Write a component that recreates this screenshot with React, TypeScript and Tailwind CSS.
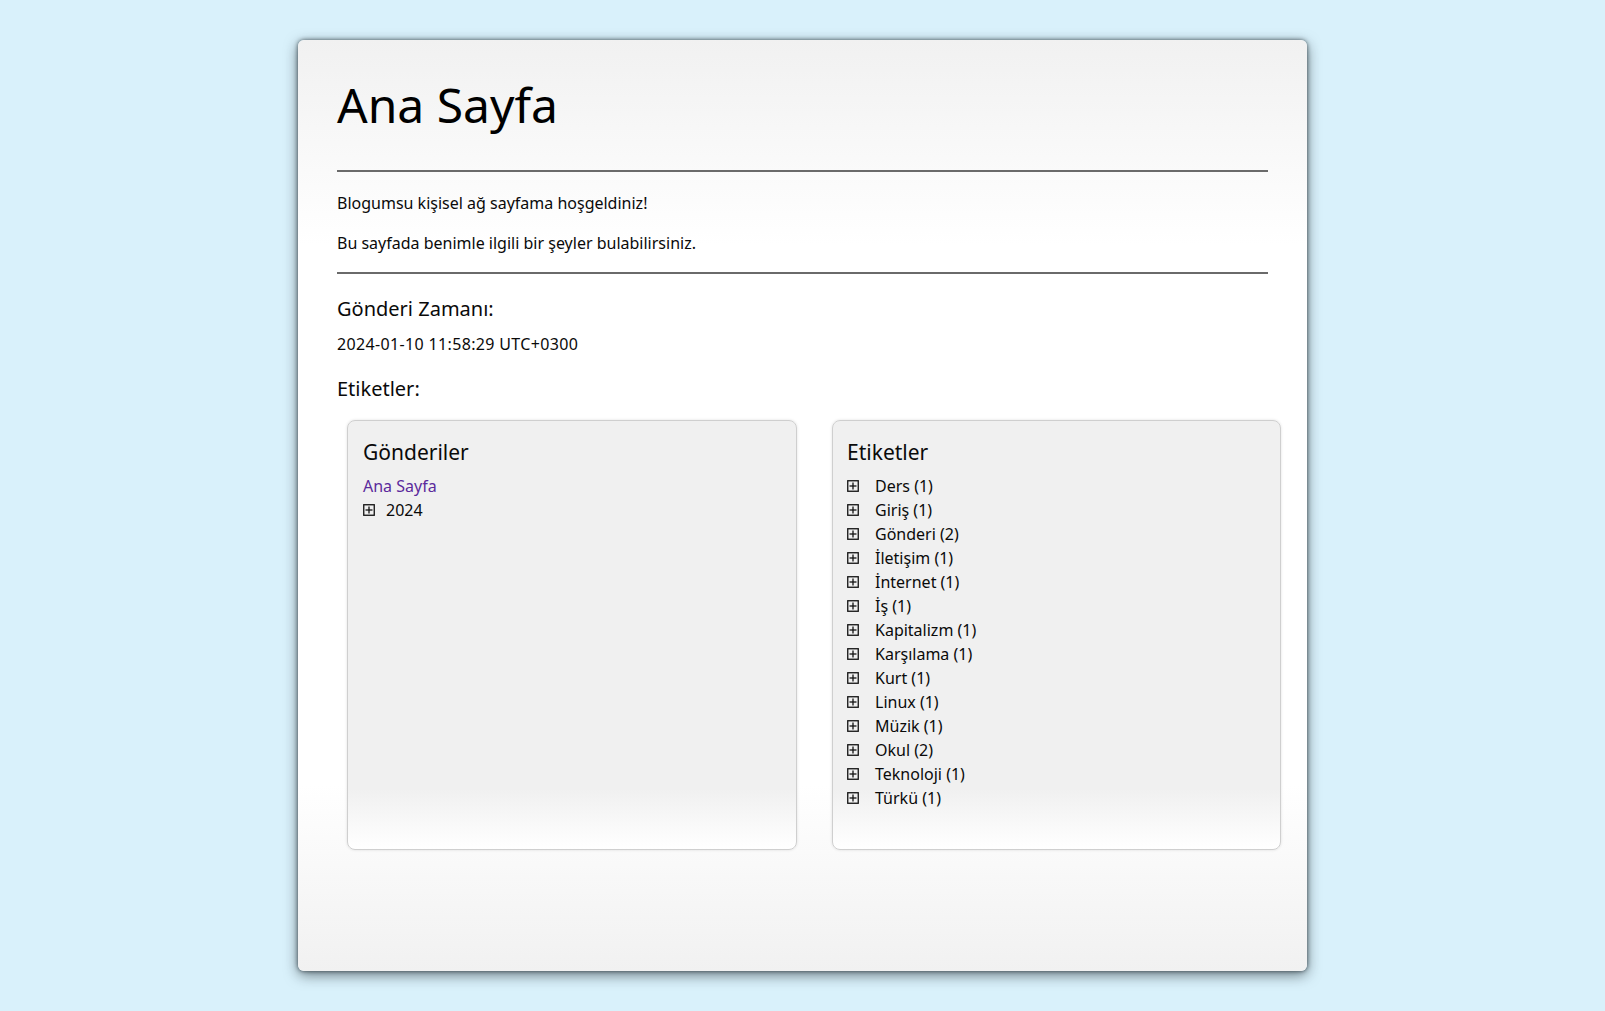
import React from "react";

const tags = [
  "Ders (1)",
  "Giriş (1)",
  "Gönderi (2)",
  "İletişim (1)",
  "İnternet (1)",
  "İş (1)",
  "Kapitalizm (1)",
  "Karşılama (1)",
  "Kurt (1)",
  "Linux (1)",
  "Müzik (1)",
  "Okul (2)",
  "Teknoloji (1)",
  "Türkü (1)",
];

function PlusBox() {
  return (
    <svg width="12" height="12" viewBox="0 0 12 12" className="shrink-0">
      <rect x="0.75" y="0.75" width="10.5" height="10.5" fill="none" stroke="#111" strokeWidth="1.3" />
      <line x1="6" y1="2.5" x2="6" y2="9.5" stroke="#111" strokeWidth="1.3" />
      <line x1="2.5" y1="6" x2="9.5" y2="6" stroke="#111" strokeWidth="1.3" />
    </svg>
  );
}

function Item({ label }: { label: string }) {
  return (
    <div className="flex items-center h-[24px]">
      <PlusBox />
      <span className="ml-[16px]">{label}</span>
    </div>
  );
}

export default function App() {
  return (
    <div
      className="min-h-[1011px] w-full bg-[#d9f1fb] pt-[40px] text-[#0a0a0a]"
      style={{ fontFamily: '"Noto Sans", "Open Sans", sans-serif' }}
    >
      <div className="mx-auto w-[1009px] h-[931px] rounded-[6px] bg-[linear-gradient(to_bottom,#f1f1f1_0%,#ffffff_22%,#ffffff_80%,#f1f1f1_100%)] shadow-[0_0_4px_rgba(20,30,35,0.7),0_4px_14px_rgba(20,30,35,0.55)] px-[39px]">
        <h1 className="pt-[33px] text-[48px] leading-[64px] text-black">Ana Sayfa</h1>
        <div className="mt-[33px] h-[2px] bg-[#6a6a6a]" />
        <p className="mt-[19px] text-[16px] leading-[24px]">Blogumsu kişisel ağ sayfama hoşgeldiniz!</p>
        <p className="mt-[16px] text-[16px] leading-[24px]">Bu sayfada benimle ilgili bir şeyler bulabilirsiniz.</p>
        <div className="mt-[17px] h-[2px] bg-[#6a6a6a]" />
        <h2 className="mt-[21px] text-[20px] leading-[28px]">Gönderi Zamanı:</h2>
        <p className="mt-[9px] text-[16px] leading-[24px] tracking-[0.35px]">2024-01-10 11:58:29 UTC+0300</p>
        <h2 className="mt-[19px] text-[20px] leading-[28px]">Etiketler:</h2>
        <div className="mt-[17px] ml-[10px] flex gap-[35px]">
          <div className="w-[450px] h-[430px] shrink-0 rounded-[8px] border border-[#cfcfcf] shadow-[0_0_3px_rgba(0,0,0,0.12)] bg-[linear-gradient(to_bottom,#f0f0f0_0%,#f0f0f0_86%,#ffffff_100%)] px-[15px] pt-[16px]">
            <h3 className="text-[21px] leading-[30px]">Gönderiler</h3>
            <div className="mt-[7px] text-[16px]">
              <div className="h-[24px] leading-[24px] text-[#5b2a9c]">Ana Sayfa</div>
              <div className="flex items-center h-[24px]">
                <PlusBox />
                <span className="ml-[11px]">2024</span>
              </div>
            </div>
          </div>
          <div className="w-[449px] h-[430px] shrink-0 rounded-[8px] border border-[#cfcfcf] shadow-[0_0_3px_rgba(0,0,0,0.12)] bg-[linear-gradient(to_bottom,#f0f0f0_0%,#f0f0f0_86%,#ffffff_100%)] pl-[14px] pr-[15px] pt-[16px]">
            <h3 className="text-[21px] leading-[30px]">Etiketler</h3>
            <div className="mt-[7px] text-[16px] leading-[24px]">
              {tags.map((t) => (
                <Item key={t} label={t} />
              ))}
            </div>
          </div>
        </div>
      </div>
    </div>
  );
}
